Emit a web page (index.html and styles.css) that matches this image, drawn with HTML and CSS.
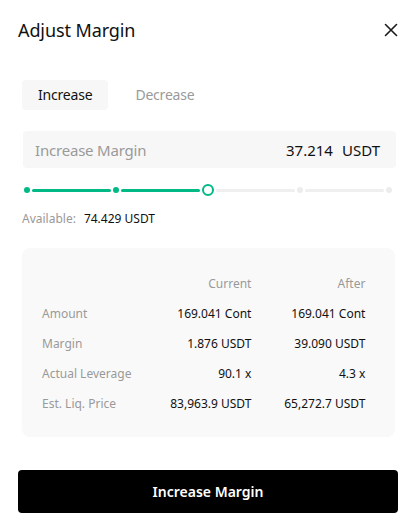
FILE: index.html
```html
<!DOCTYPE html>
<html>
<head>
<meta charset="utf-8">
<link rel="stylesheet" href="styles.css">
</head>
<body>
<div class="modal">
  <div class="header">
    <h1 class="title">Adjust Margin</h1>
    <svg class="close" width="14" height="14" viewBox="0 0 14 14"><path d="M1.5 1.5 L12.5 12.5 M12.5 1.5 L1.5 12.5" stroke="#1a1a1a" stroke-width="1.6" stroke-linecap="round"/></svg>
  </div>
  <div class="tabs">
    <div class="tab active">Increase</div>
    <div class="tab">Decrease</div>
  </div>
  <div class="input">
    <span class="placeholder">Increase Margin</span>
    <span class="value">37.214</span>
    <span class="unit">USDT</span>
  </div>
  <div class="slider">
    <span class="dot on"></span><span class="seg on"></span>
    <span class="dot on"></span><span class="seg on"></span>
    <span class="thumb"></span><span class="seg"></span>
    <span class="dot"></span><span class="seg"></span>
    <span class="dot"></span>
  </div>
  <div class="avail"><span class="avail-label">Available:</span><span class="avail-val">74.429 USDT</span></div>
  <div class="card">
    <span></span><span class="head">Current</span><span class="head">After</span>
    <span class="label">Amount</span><span class="num">169.041 Cont</span><span class="num">169.041 Cont</span>
    <span class="label">Margin</span><span class="num">1.876 USDT</span><span class="num">39.090 USDT</span>
    <span class="label">Actual Leverage</span><span class="num">90.1 x</span><span class="num">4.3 x</span>
    <span class="label">Est. Liq. Price</span><span class="num">83,963.9 USDT</span><span class="num">65,272.7 USDT</span>
  </div>
  <button class="submit">Increase Margin</button>
</div>
</body>
</html>
```
FILE: styles.css
```css
* { box-sizing: border-box; }
html, body { margin: 0; padding: 0; background: #fff; }
body { font-family: "Noto Sans", "Inter", sans-serif; color: #111; }
.modal { width: 417px; height: 532px; padding: 0 22px; }
.header { display: flex; align-items: center; justify-content: space-between; height: 60px; margin: 0 -4px; }
.title { margin: 0; font-size: 18px; font-weight: 400; color: #111; letter-spacing: -0.1px; }
.close { margin-right: 1px; }
.tabs { display: flex; gap: 11px; margin-top: 20px; }
.tab { height: 30px; line-height: 30px; padding: 0 16px; font-size: 14px; color: #9a9a9a; border-radius: 4px; letter-spacing: -0.2px; }
.tab.active { background: #f7f7f7; color: #111; }
.input { display: flex; align-items: center; height: 37px; margin-top: 21px; margin-left: 1px; margin-right: -1px; padding: 0 16px 0 12px; background: #f7f7f7; border-radius: 4px; font-size: 15px; }
.placeholder { flex: 1; color: #9a9a9a; letter-spacing: -0.2px; }
.value { color: #111; margin-right: 9px; }
.unit { color: #111; }
.slider { display: flex; align-items: center; gap: 2px; height: 12px; margin: 16px 3px 0 2px; }
.dot { width: 6px; height: 6px; border-radius: 50%; background: #ececec; flex: none; }
.dot.on { background: #00b985; }
.seg { flex: 1; height: 3px; background: #efefef; border-radius: 2px; }
.seg.on { background: #00b985; }
.thumb { width: 12px; height: 12px; border-radius: 50%; border: 2px solid #00b985; background: #fff; flex: none; }
.avail { margin-top: 15px; font-size: 12px; display: flex; gap: 8px; line-height: 16px; }
.avail-label { color: #999; }
.avail-val { color: #111; }
.card { display: grid; grid-template-columns: 1fr 120px 114px; grid-auto-rows: 30px; align-items: center; margin-top: 21px; padding: 20px 30px 19px 20px; background: #f9f9f9; border-radius: 8px; font-size: 12px; white-space: nowrap; }
.head { color: #999; text-align: right; }
.label { color: #999; }
.num { color: #111; text-align: right; }
.submit { display: block; width: 380px; height: 43px; margin: 33px 0 0 -4px; background: #000; color: #fff; border: 0; border-radius: 4px; font-family: inherit; font-size: 14px; font-weight: 600; }
```
